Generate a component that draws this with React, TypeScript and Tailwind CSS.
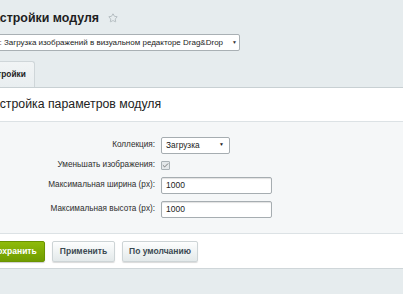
import { Star, Check } from "lucide-react";

function Row({ label, className = "", children }: { label: string; className?: string; children: React.ReactNode }) {
  return (
    <div className={`flex items-center h-[20px] ${className}`}>
      <div className="w-[161px] pr-[6px] text-right text-[8.2px] text-[#2d2d2d] whitespace-nowrap">{label}</div>
      <div className="flex items-center">{children}</div>
    </div>
  );
}

export default function App() {
  return (
    <div className="w-[403px] h-[294px] overflow-hidden bg-[#e6ecee] font-['Liberation_Sans',Arial,sans-serif] text-[#222]">
      <div className="flex items-center gap-[9px] h-[34px] pt-[2px] -ml-[16px]">
        <h1 className="text-[12.4px] font-bold text-[#1e1e1e] leading-none whitespace-nowrap">Настройки модуля</h1>
        <Star size={10} strokeWidth={1.5} className="text-[#9aa3a8]" />
      </div>

      <div className="h-[27px] flex items-start">
        <div className="-ml-[60px] w-[300px] h-[17px] flex items-center justify-end gap-[9px] pr-[2px] bg-white border border-[#a9b0b4] rounded-[2px] text-[8px] text-[#222] whitespace-nowrap overflow-hidden">
          <span>Модуль: Загрузка изображений в визуальном редакторе Drag&amp;Drop</span>
          <span className="text-[5px] text-[#333]">▼</span>
        </div>
      </div>

      <div className="h-[26px] flex items-end">
        <div className="h-[26px] -ml-[33px] pl-[14px] pr-[8px] flex items-center bg-gradient-to-b from-[#f1f4f5] to-[#e9eef0] border border-b-0 border-[#cfd6d9] rounded-t-[3px] text-[8.3px] font-bold text-[#222] whitespace-nowrap">
          Настройки
        </div>
      </div>

      <div className="border-t border-[#c8d0d3] bg-white">
        <div className="h-[33px] flex items-center -ml-[16px] text-[12.3px] text-[#222] whitespace-nowrap">
          Настройка параметров модуля
        </div>
        <div className="border-t border-[#dce2e5] bg-[#f5f7f8] pt-[13px] pb-[14px]">
          <Row label="Коллекция:">
            <div className="w-[69px] h-[17px] flex items-center justify-between pl-[4px] pr-[5px] bg-white border border-[#a6adb1] rounded-[2px] text-[8.3px]">
              <span>Загрузка</span>
              <span className="text-[5px]">▼</span>
            </div>
          </Row>
          <Row label="Уменьшать изображения:">
            <div className="w-[9px] h-[9px] flex items-center justify-center bg-[#e4e8ea] border border-[#a9b1b5] rounded-[1px]">
              <Check size={7} strokeWidth={2.5} className="text-[#555]" />
            </div>
          </Row>
          <Row label="Максимальная ширина (px):">
            <div className="w-[111px] h-[17px] flex items-center px-[4px] bg-white border border-[#a6adb1] rounded-[2px] shadow-[inset_0_1px_1px_rgba(0,0,0,0.12)] text-[8.5px]">
              1000
            </div>
          </Row>
          <Row label="Максимальная высота (px):" className="mt-[4px]">
            <div className="w-[111px] h-[17px] flex items-center px-[4px] bg-white border border-[#a6adb1] rounded-[2px] shadow-[inset_0_1px_1px_rgba(0,0,0,0.12)] text-[8.5px]">
              1000
            </div>
          </Row>
        </div>
        <div className="border-t border-[#dce2e5] h-[35px] flex items-center gap-[7px]">
          <button className="h-[21px] w-[62px] -ml-[17px] bg-gradient-to-b from-[#8fbb0a] to-[#6f9c00] border border-[#6a9300] rounded-[2px] text-white text-[8.5px] font-bold shadow-[0_1px_1px_rgba(0,0,0,0.2)] whitespace-nowrap">
            Сохранить
          </button>
          <button className="h-[21px] w-[63px] bg-gradient-to-b from-[#fdfefe] to-[#e3e9ea] border border-[#cdd4d6] rounded-[2px] text-[#3c4a52] text-[8.5px] font-bold shadow-[0_1px_1px_rgba(0,0,0,0.15)]">
            Применить
          </button>
          <button className="h-[21px] w-[76px] bg-gradient-to-b from-[#fdfefe] to-[#e3e9ea] border border-[#cdd4d6] rounded-[2px] text-[#3c4a52] text-[8.5px] font-bold shadow-[0_1px_1px_rgba(0,0,0,0.15)]">
            По умолчанию
          </button>
        </div>
      </div>
      <div className="border-t border-[#cfd6d9] h-[30px]" />
    </div>
  );
}
